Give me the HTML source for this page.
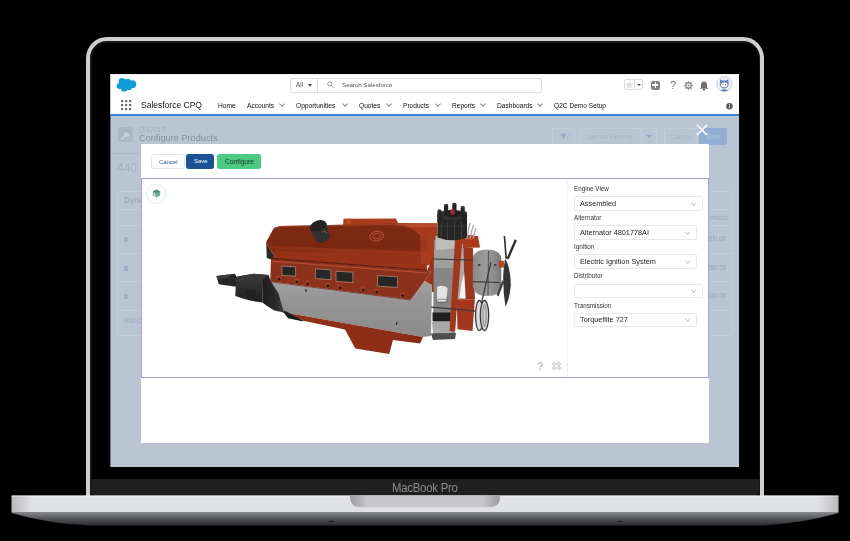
<!DOCTYPE html>
<html><head><meta charset="utf-8">
<style>
*{margin:0;padding:0;box-sizing:border-box}
html,body{width:850px;height:541px;overflow:hidden;background:#000;font-family:"Liberation Sans",sans-serif}
.a{position:absolute}
.t{position:absolute;white-space:nowrap;line-height:1;will-change:transform}
#scr{position:absolute;left:0;top:0;width:850px;height:541px;clip-path:inset(74px 110.5px 74px 110.4px)}
.nav{font-size:6.6px;color:#0e0e0e;top:102.8px}
.chev{position:absolute;top:102.4px;width:4px;height:4px;border-right:0.8px solid #8a8886;border-bottom:0.8px solid #8a8886;transform:rotate(45deg)}
.lbl{font-size:6.3px;color:#333}
.sel{position:absolute;left:574px;height:14.5px;border:1px solid #e6e8eb;border-radius:2px;background:#fff}
.selt{font-size:7.3px;color:#1c1c1c;top:200px}
.schev{position:absolute;width:3.5px;height:3.5px;border-right:0.7px solid #c9c7c5;border-bottom:0.7px solid #c9c7c5;transform:rotate(45deg)}
</style></head><body>

<!-- ===== LID ===== -->
<div class="a" style="left:86px;top:36.8px;width:678px;height:470px;border-radius:21px 21px 0 0;background:#cdcfd2"></div>
<div class="a" style="left:90px;top:40.8px;width:670px;height:466px;border-radius:17px 17px 0 0;background:#161616"></div>
<div class="a" style="left:91.5px;top:42.8px;width:667px;height:466px;border-radius:15px 15px 0 0;background:#000"></div>
<div class="a" style="left:91px;top:479px;width:668px;height:17px;background:#1f1f1f;border-radius:0 0 5px 5px"></div>
<div class="t" style="left:392px;top:481.6px;font-size:11.3px;color:#8c8c8c;letter-spacing:-0.2px;transform:scaleY(1.12);transform-origin:0 0">MacBook Pro</div>

<!-- ===== BASE ===== -->
<svg class="a" style="left:0;top:0" width="850" height="541">
  <defs>
    <linearGradient id="bb" x1="0" y1="0" x2="0" y2="1">
      <stop offset="0" stop-color="#8e8f92"/>
      <stop offset="0.5" stop-color="#55565a"/>
      <stop offset="1" stop-color="#2a2b2e"/>
    </linearGradient>
    <linearGradient id="bl" x1="0" y1="0" x2="1" y2="0">
      <stop offset="0" stop-color="#b9b9bb"/>
      <stop offset="0.025" stop-color="#e1e2e4"/>
      <stop offset="0.975" stop-color="#e1e2e4"/>
      <stop offset="1" stop-color="#b9b9bb"/>
    </linearGradient>
    <linearGradient id="nt" x1="0" y1="0" x2="1" y2="0">
      <stop offset="0" stop-color="#9c9c9e"/>
      <stop offset="0.12" stop-color="#c8c8ca"/>
      <stop offset="0.88" stop-color="#c8c8ca"/>
      <stop offset="1" stop-color="#9c9c9e"/>
    </linearGradient>
  </defs>
  <path d="M11.5 511.5 L838.5 511.5 L838.5 513 Q800 524 760 525.5 L90 525.5 Q50 524 11.5 513 Z" fill="url(#bb)"/>
  <rect x="11.5" y="495.5" width="827" height="16.5" fill="url(#bl)"/>
  <rect x="11.5" y="495.5" width="827" height="1.2" fill="#f0f0f2" opacity="0.6"/>
  <ellipse cx="331.5" cy="521.5" rx="3.4" ry="0.65" fill="#1e1e1e"/>
  <ellipse cx="620.1" cy="521.5" rx="3.4" ry="0.65" fill="#1e1e1e"/>
  <path d="M350 495.5 L500 495.5 L500 496 Q500 507.3 489 507.3 L361 507.3 Q350 507.3 350 496 Z" fill="url(#nt)"/>
</svg>

<!-- ===== SCREEN ===== -->
<div id="scr">
  <!-- page bg overlay -->
  <div class="a" style="left:110px;top:74px;width:629px;height:393px;background:#b9c5d2"></div>
  <!-- header -->
  <div class="a" style="left:110px;top:74px;width:629px;height:40px;background:#fff"></div>
  <div class="a" style="left:110px;top:74px;width:629px;height:1px;background:#efefef"></div>
  <div class="a" style="left:110px;top:113.8px;width:629px;height:2.2px;background:#2e86d8"></div>

  <!-- cloud logo -->
  <svg class="a" style="left:0;top:0" width="850" height="120">
    <g fill="#0f9cd9">
      <circle cx="122.2" cy="81.6" r="3.6"/><circle cx="127.6" cy="81.7" r="3"/><circle cx="132.2" cy="84.2" r="4"/>
      <circle cx="119.6" cy="86" r="2.9"/><circle cx="124.2" cy="88.4" r="3.2"/><circle cx="128.8" cy="87.2" r="3"/>
      <rect x="120" y="81" width="12" height="7"/>
    </g>
  </svg>
  <!-- app launcher -->
  <svg class="a" style="left:121px;top:100px" width="11" height="11">
    <g fill="#706e6b">
      <rect x="0" y="0" width="2.2" height="2.2"/><rect x="4" y="0" width="2.2" height="2.2"/><rect x="8" y="0" width="2.2" height="2.2"/>
      <rect x="0" y="4" width="2.2" height="2.2"/><rect x="4" y="4" width="2.2" height="2.2"/><rect x="8" y="4" width="2.2" height="2.2"/>
      <rect x="0" y="8" width="2.2" height="2.2"/><rect x="4" y="8" width="2.2" height="2.2"/><rect x="8" y="8" width="2.2" height="2.2"/>
    </g>
  </svg>
  <div class="t" style="left:141px;top:100.6px;font-size:8.5px;color:#141414">Salesforce CPQ</div>

  <div class="t nav" style="left:218px">Home</div>
  <div class="t nav" style="left:246.5px">Accounts</div><div class="chev" style="left:280px"></div>
  <div class="t nav" style="left:295.5px">Opportunities</div><div class="chev" style="left:343px"></div>
  <div class="t nav" style="left:359px">Quotes</div><div class="chev" style="left:387px"></div>
  <div class="t nav" style="left:403px">Products</div><div class="chev" style="left:435.5px"></div>
  <div class="t nav" style="left:451.5px">Reports</div><div class="chev" style="left:480.5px"></div>
  <div class="t nav" style="left:497px">Dashboards</div><div class="chev" style="left:538px"></div>
  <div class="t nav" style="left:554px">Q2C Demo Setup</div>

  <!-- search -->
  <div class="a" style="left:289.5px;top:77.5px;width:252.5px;height:15px;border:1px solid #dddbda;border-radius:3px;background:#fff"></div>
  <div class="a" style="left:317px;top:78px;width:1px;height:14px;background:#dddbda"></div>
  <div class="t" style="left:295.5px;top:81.5px;font-size:6.3px;color:#55534f">All</div>
  <div class="a" style="left:307.5px;top:83.5px;width:0;height:0;border-left:2.5px solid transparent;border-right:2.5px solid transparent;border-top:3px solid #514f4d"></div>
  <svg class="a" style="left:327px;top:81px" width="7" height="7"><circle cx="2.8" cy="2.8" r="2.1" fill="none" stroke="#8a8886" stroke-width="0.8"/><line x1="4.3" y1="4.3" x2="6.4" y2="6.4" stroke="#8a8886" stroke-width="0.9"/></svg>
  <div class="t" style="left:341.5px;top:81.5px;font-size:6.2px;color:#55534f">Search Salesforce</div>

  <!-- right icons -->
  <div class="a" style="left:623.5px;top:79.3px;width:19px;height:11px;border:1px solid #dddbda;border-radius:2px;background:#fff"></div>
  <div class="a" style="left:634px;top:79.3px;width:1px;height:11px;background:#dddbda"></div>
  <div class="t" style="left:624.3px;top:78.6px;font-size:12px;color:#e0e0e0">&#9733;</div>
  <div class="a" style="left:637px;top:84px;width:0;height:0;border-left:2px solid transparent;border-right:2px solid transparent;border-top:2.5px solid #514f4d"></div>
  <div class="a" style="left:650.5px;top:80.5px;width:9.5px;height:9px;border-radius:2px;background:#858381"></div>
  <div class="a" style="left:654.6px;top:82px;width:1.3px;height:6px;background:#fff"></div>
  <div class="a" style="left:652.2px;top:84.4px;width:6px;height:1.3px;background:#fff"></div>
  <div class="t" style="left:669.5px;top:80px;font-size:11px;color:#706e6b">?</div>
  <svg class="a" style="left:683.8px;top:80.6px" width="9" height="9" viewBox="0 0 10 10">
    <g fill="#8a8886"><circle cx="5" cy="5" r="3.4"/>
    <rect x="4.1" y="0.2" width="1.8" height="9.6"/><rect x="0.2" y="4.1" width="9.6" height="1.8"/>
    <rect x="4.1" y="0.2" width="1.8" height="9.6" transform="rotate(45 5 5)"/><rect x="4.1" y="0.2" width="1.8" height="9.6" transform="rotate(-45 5 5)"/></g>
    <circle cx="5" cy="5" r="2.3" fill="#fff"/><circle cx="5" cy="5" r="1.2" fill="#8a8886"/>
  </svg>
  <svg class="a" style="left:698.5px;top:80.5px" width="10" height="10" viewBox="0 0 10 10">
    <path d="M5 0.6 C7.2 0.6 8 2.4 8 4.4 L8 6.6 L9.3 7.8 L0.7 7.8 L2 6.6 L2 4.4 C2 2.4 2.8 0.6 5 0.6Z" fill="#706e6b"/>
    <circle cx="5" cy="8.8" r="1.1" fill="#706e6b"/>
  </svg>
  <svg class="a" style="left:715.5px;top:75.6px" width="16.5" height="16" viewBox="0 0 16.5 16">
    <circle cx="8.25" cy="8" r="7.6" fill="#eef1f6" stroke="#c3cbdb" stroke-width="0.9"/>
    <path d="M3.8 6.5 L4.4 3.3 L6.4 4.6 L10.1 4.6 L12.1 3.3 L12.7 6.5 Q13.2 12.2 8.25 12.6 Q3.3 12.2 3.8 6.5Z" fill="#6180bd"/>
    <ellipse cx="8.25" cy="8.9" rx="3.3" ry="2.3" fill="#fff"/>
    <circle cx="7" cy="8.6" r="0.5" fill="#334"/><circle cx="9.5" cy="8.6" r="0.5" fill="#334"/>
    <path d="M4.2 14.3 Q8.25 12 12.3 14.3 Q8.25 16.5 4.2 14.3Z" fill="#6180bd"/>
  </svg>
  <svg class="a" style="left:726px;top:103.3px" width="7" height="7"><circle cx="3.4" cy="3.2" r="3.2" fill="#5a5856"/><rect x="2.95" y="2.6" width="0.9" height="2.5" fill="#fff"/><circle cx="3.4" cy="1.6" r="0.5" fill="#fff"/></svg>

  <!-- page header under overlay -->
  <div class="a" style="left:118.4px;top:127px;width:14.8px;height:15.3px;border-radius:2px;background:#abb7c4"></div>
  <svg class="a" style="left:119.8px;top:128.6px" width="12" height="12" viewBox="0 0 12 12"><path d="M2.5 9.5 L6.8 5.2" stroke="#c8d1db" stroke-width="1.9" stroke-linecap="round"/><path d="M6.2 2.6 A2.6 2.6 0 1 0 9.4 5.8 L8 4.4Z" fill="#c8d1db"/><path d="M8.6 1.6 L10.4 3.4 L9 4.8 L7.2 3Z" fill="#abb7c4"/></svg>
  <div class="t" style="left:139px;top:126.6px;font-size:6.4px;color:#a2adba;letter-spacing:0.2px">Q-17017</div>
  <div class="t" style="left:139px;top:134px;font-size:9.2px;color:#8591a0">Configure Products</div>
  <div class="t" style="left:116.5px;top:162.2px;font-size:12px;color:#a6b1bd">440</div>
  <div class="a" style="left:111px;top:152.8px;width:30px;height:1px;background:#adb9c5"></div>

  <!-- top right overlay buttons -->
  <div class="a" style="left:552px;top:128px;width:22.5px;height:16.5px;border:1px solid #c3cdd8;border-radius:2px"></div>
  <svg class="a" style="left:559.5px;top:133px" width="7" height="7"><path d="M0.5 0.8 L6.5 0.8 L4 3.8 L4 6.2 L3 6.2 L3 3.8Z" fill="#8fa5c4"/></svg>
  <div class="a" style="left:579.5px;top:128px;width:77.5px;height:16.5px;border:1px solid #c3cdd8;border-radius:2px"></div>
  <div class="a" style="left:640.5px;top:128px;width:1px;height:16.5px;background:#c3cdd8"></div>
  <div class="t" style="left:587px;top:133.5px;font-size:6.3px;color:#a1b4cc">Launch External</div>
  <div class="a" style="left:646px;top:135px;width:0;height:0;border-left:3px solid transparent;border-right:3px solid transparent;border-top:3.5px solid #8ba4c8"></div>
  <div class="a" style="left:663.5px;top:128px;width:33px;height:16.5px;border:1px solid #c3cdd8;border-radius:2px"></div>
  <div class="t" style="left:671px;top:133.5px;font-size:6.3px;color:#a1b4cc">Cancel</div>
  <div class="a" style="left:698.5px;top:128px;width:28.5px;height:16.5px;border-radius:2px;background:#93aed3"></div>
  <div class="t" style="left:706px;top:133.8px;font-size:6.3px;color:#b3c6df">Save</div>

  <!-- background card -->
  <div class="a" style="left:117px;top:190.5px;width:616px;height:145px;border:1px solid #c3cdd8;border-radius:3px"></div>
  <div class="a" style="left:117px;top:209px;width:616px;height:1px;background:#c3cdd8"></div>
  <div class="a" style="left:117px;top:225px;width:616px;height:1px;background:#c3cdd8"></div>
  <div class="a" style="left:117px;top:253px;width:616px;height:1px;background:#c3cdd8"></div>
  <div class="a" style="left:117px;top:281.3px;width:616px;height:1px;background:#c3cdd8"></div>
  <div class="a" style="left:117px;top:309.8px;width:616px;height:1px;background:#c3cdd8"></div>
  <div class="t" style="left:124px;top:196px;font-size:8.5px;color:#9aa6b2">Dyna</div>
  <div class="t" style="left:710px;top:214.5px;font-size:6px;color:#9ba7b4">PRICE</div>
  <div class="t" style="left:707px;top:236px;font-size:6.3px;color:#97a3b1">300.00</div>
  <div class="t" style="left:707px;top:264.5px;font-size:6.3px;color:#97a3b1">280.00</div>
  <div class="t" style="left:707px;top:293px;font-size:6.3px;color:#97a3b1">430.00</div>
  <div class="t" style="left:124px;top:317.5px;font-size:6.3px;color:#98acc8">Add C</div>
  <svg class="a" style="left:124px;top:236.5px" width="4" height="5"><rect x="0.3" y="1" width="3.4" height="4" fill="#98acc8"/><rect x="0" y="0" width="4" height="0.8" fill="#98acc8"/></svg>
  <svg class="a" style="left:124px;top:265.5px" width="4" height="5"><rect x="0.3" y="1" width="3.4" height="4" fill="#98acc8"/><rect x="0" y="0" width="4" height="0.8" fill="#98acc8"/></svg>
  <svg class="a" style="left:124px;top:294px" width="4" height="5"><rect x="0.3" y="1" width="3.4" height="4" fill="#98acc8"/><rect x="0" y="0" width="4" height="0.8" fill="#98acc8"/></svg>

  <!-- close X -->
  <svg class="a" style="left:695.5px;top:124px" width="12" height="12"><path d="M1 1 L11 11 M11 1 L1 11" stroke="#fff" stroke-width="1.6"/></svg>

  <!-- ===== MODAL ===== -->
  <div class="a" style="left:141px;top:144.3px;width:568px;height:298.7px;background:#fff"></div>
  <div class="a" style="left:150.5px;top:154.2px;width:34px;height:14.7px;border:1px solid #e2e4e8;border-radius:2.5px;background:#fff"></div>
  <div class="t" style="left:158.5px;top:158.8px;font-size:6px;color:#2d5fa6">Cancel</div>
  <div class="a" style="left:186.2px;top:153.6px;width:28px;height:15px;border-radius:2.5px;background:#1b5296"></div>
  <div class="t" style="left:193.5px;top:157.6px;font-size:6px;color:#fff">Save</div>
  <div class="a" style="left:217.4px;top:153.9px;width:43.6px;height:15px;border-radius:2.5px;background:#4dca81"></div>
  <div class="t" style="left:225.3px;top:159.2px;font-size:6.7px;color:#16301d">Configure</div>

  <!-- canvas border -->
  <div class="a" style="left:141px;top:177.7px;width:567.8px;height:200.3px;border:1px solid #a5a4de"></div>
  <div class="a" style="left:567.3px;top:178.7px;width:1px;height:198.3px;background:#efeff1"></div>

  <!-- cube icon -->
  <div class="a" style="left:146.2px;top:184px;width:19.5px;height:19.5px;border-radius:50%;border:1px solid #d6ece0;background:#fff"></div>
  <svg class="a" style="left:151.5px;top:189px" width="9" height="9" viewBox="0 0 9 9"><path d="M4.5 0.5 L8.2 2.4 L8.2 6.6 L4.5 8.5 L0.8 6.6 L0.8 2.4Z" fill="#6bb39a"/><path d="M4.5 0.5 L8.2 2.4 L4.5 4.3 L0.8 2.4Z" fill="#4f8f7d"/><path d="M2.2 3.5 L2.2 6 L4 7" stroke="#fff" stroke-width="0.7" fill="none"/></svg>

  <!-- canvas icons -->
  <div class="t" style="left:536.6px;top:361px;font-size:10.5px;color:#c2c2c2;font-weight:bold">?</div>
  <svg class="a" style="left:551.5px;top:362.3px" width="9" height="8" viewBox="0 0 9 8"><g fill="none" stroke="#c2c2c2" stroke-width="1"><circle cx="2" cy="2" r="1.4"/><circle cx="7" cy="2" r="1.4"/><circle cx="2" cy="6" r="1.4"/><circle cx="7" cy="6" r="1.4"/><path d="M3.4 2 H5.6 M3.4 6 H5.6"/></g></svg>

  <!-- right panel -->
  <div class="t lbl" style="left:574px;top:185.5px">Engine View</div>
  <div class="sel" style="top:196.2px;width:128.7px"></div>
  <div class="t selt" style="left:579.5px;top:199.5px">Assembled</div>
  <div class="schev" style="left:691.5px;top:201px"></div>

  <div class="t lbl" style="left:574px;top:214.5px">Alternator</div>
  <div class="sel" style="top:225.4px;width:122.8px"></div>
  <div class="t selt" style="left:579.5px;top:228.7px">Alternator 4801778AI</div>
  <div class="schev" style="left:686px;top:230.2px"></div>

  <div class="t lbl" style="left:574px;top:244px">Ignition</div>
  <div class="sel" style="top:254.2px;width:122.8px"></div>
  <div class="t selt" style="left:579.5px;top:257.5px">Electric Ignition System</div>
  <div class="schev" style="left:686px;top:259px"></div>

  <div class="t lbl" style="left:574px;top:273.3px">Distributor</div>
  <div class="sel" style="top:283.5px;width:128.7px"></div>
  <div class="schev" style="left:691.5px;top:288.3px"></div>

  <div class="t lbl" style="left:574px;top:303px">Transmission</div>
  <div class="sel" style="top:312.5px;width:122.8px"></div>
  <div class="t selt" style="left:579.5px;top:315.8px">Torqueflite 727</div>
  <div class="schev" style="left:686px;top:317.3px"></div>

  <!-- ENGINE placeholder -->
  <svg id="engine" class="a" style="left:0;top:0" width="850" height="541">
    <defs>
      <linearGradient id="gblk" x1="0" y1="0" x2="0" y2="1">
        <stop offset="0" stop-color="#a2a2a2"/><stop offset="0.25" stop-color="#979797"/><stop offset="1" stop-color="#8b8b8b"/>
      </linearGradient>
      <linearGradient id="gcov" x1="0" y1="0" x2="0" y2="1">
        <stop offset="0" stop-color="#7e2912"/><stop offset="0.52" stop-color="#7c2711"/><stop offset="0.62" stop-color="#963119"/><stop offset="1" stop-color="#9a331a"/>
      </linearGradient>
      <linearGradient id="gpan" x1="0" y1="0" x2="1" y2="0">
        <stop offset="0" stop-color="#952f17"/><stop offset="1" stop-color="#8a2c16"/>
      </linearGradient>
      <linearGradient id="gtr" x1="0" y1="0" x2="0" y2="1">
        <stop offset="0" stop-color="#3c3c3c"/><stop offset="1" stop-color="#1d1d1d"/>
      </linearGradient>
      <linearGradient id="gbell" x1="0" y1="0" x2="1" y2="0">
        <stop offset="0" stop-color="#1c1c1c"/><stop offset="0.6" stop-color="#2a2a2a"/><stop offset="1" stop-color="#3e3e3e"/>
      </linearGradient>
      <linearGradient id="galt" x1="0" y1="0" x2="1" y2="0">
        <stop offset="0" stop-color="#8a8a8a"/><stop offset="0.5" stop-color="#9c9c9c"/><stop offset="1" stop-color="#7a7a7a"/>
      </linearGradient>
    </defs>
    <!-- far bank / intake behind cover -->
    <path d="M343 226 L343.5 218.8 L396 218.6 L398 223 L437.3 223.2 L438 262 L420 268 L343 264Z" fill="#a83b1c"/>
    <path d="M346 219 L351 218.6 L351 226 L346 226Z" fill="#bb4a2a"/>
    <path d="M380 224.5 L437 223.4 L437 227 L381 228Z" fill="#b9492b"/>
    <!-- valve cover -->
    <path d="M274 227.8 L280.5 226.1 L390 223.8 L405 225.5 L413.5 228.5 L425.9 236.5 L426.8 263 L427 270.5 L271 258.6 L274 255.7 L266.2 243.5 L266.2 242Z" fill="url(#gcov)"/>
    <path d="M274 228.3 L280.5 226.6 L390 224.3 L405 226 L413.5 229 L425.4 237" stroke="#a4452b" stroke-width="1.3" fill="none" opacity="0.8"/>
    <path d="M266.6 245.5 L426.5 252 L426.5 254.5 L268 248.5Z" fill="#a4391d" opacity="0.5"/>
    <path d="M413.5 228.5 L425.9 236.5 L426.8 263 L421 265 L420 236Z" fill="#b4452a" opacity="0.55"/>
    <ellipse cx="376.6" cy="236.2" rx="6.8" ry="4.8" fill="none" stroke="#c65e40" stroke-width="0.8" transform="rotate(-12 376.6 236.2)"/>
    <ellipse cx="376.6" cy="236.2" rx="4" ry="2.7" fill="none" stroke="#c65e40" stroke-width="0.7" transform="rotate(-12 376.6 236.2)"/>
    <path d="M266.2 243.5 L274 255.7 L271.5 259.5 L266.8 258Z" fill="#2a2a2a"/>
    <!-- head / port band -->
    <path d="M271 258.6 L427 270.5 L431 271.8 L424.7 281 L413.5 296.5 L410.6 299.7 L270.2 281.5Z" fill="#8c321c"/>
    <path d="M271 258.4 L427 270.2" stroke="#5a1e0e" stroke-width="1.1"/>
    <path d="M271 261.2 L427 273" stroke="#c7583a" stroke-width="0.8"/>
    <!-- ports -->
    <g fill="#262626" stroke="#d2a18a" stroke-width="0.6">
      <path d="M281.9 266 L295.6 266.9 L295.6 276.2 L281.9 275.3Z"/>
      <path d="M315.4 268.8 L330.9 269.8 L330.9 279.6 L315.4 278.6Z"/>
      <path d="M336 271.2 L352.9 272.3 L352.9 282.6 L336 281.4Z"/>
      <path d="M377.6 275.6 L397.6 276.8 L397.6 287.4 L377.6 286.2Z"/>
    </g>
    <!-- bolts -->
    <g fill="#a53e22">
      <circle cx="278.6" cy="278.2" r="2.6"/><circle cx="296.5" cy="280.8" r="2.6"/><circle cx="307.4" cy="282.8" r="2.6"/>
      <circle cx="327.6" cy="284.8" r="2.6"/><circle cx="339.8" cy="286.8" r="2.6"/><circle cx="362.9" cy="289" r="2.6"/>
      <circle cx="376.5" cy="291.2" r="2.6"/><circle cx="402.4" cy="294.6" r="2.6"/>
    </g>
    <g fill="#1a1a1a">
      <circle cx="278.9" cy="279.2" r="1.4"/><circle cx="296.8" cy="281.8" r="1.4"/><circle cx="307.7" cy="283.8" r="1.4"/>
      <circle cx="327.9" cy="285.8" r="1.4"/><circle cx="340.1" cy="287.8" r="1.4"/><circle cx="363.2" cy="290" r="1.4"/>
      <circle cx="376.8" cy="292.2" r="1.4"/><circle cx="402.7" cy="295.6" r="1.4"/>
    </g>
    <!-- gray block -->
    <path d="M268 281 L410.6 299.7 L424.7 281 L432 285 L431 336 L423 337 L290.4 313.5 L282 312.5 L275 296Z" fill="url(#gblk)"/>
    <path d="M270.2 281.7 L410.6 299.9" stroke="#7d2a15" stroke-width="0.8"/>
    <rect x="305.3" y="289" width="1.4" height="3" fill="#333"/>
    <rect x="396" y="322" width="1.4" height="3" fill="#333"/>
    <g fill="#8e8e8e"><rect x="383" y="300" width="1.5" height="3"/><rect x="392" y="301" width="1.5" height="3"/></g>
    <!-- oil pan -->
    <path d="M290.4 313.5 L304.5 321 L345 329.5 L355.3 348.4 L389.2 354 L393 339.9 L420.2 343.6 L423 337Z" fill="url(#gpan)"/>
    <!-- bell housing -->
    <path d="M262 278.5 L268.6 274.9 L270.5 280.8 L278.6 293.7 L283 309.3 L284.1 312.6 L274.2 310.4 L265.3 304.8 L262.5 302.6Z" fill="url(#gbell)"/>
    <path d="M283.6 312.5 L288 318.2 L300.7 321 L304.5 321.2 L299 318 L290.4 313.6 L284.2 310.5Z" fill="#1e1e1e"/>
    <!-- transmission -->
    <path d="M234.8 277.1 L253.6 273.8 L268.6 274.9 L262 279.9 L262.5 302.6 L255.3 301.5 L245.3 299.3 L235.3 296 L235.9 281.5Z" fill="url(#gtr)"/>
    <path d="M234.8 277.1 L253.6 273.8 L268.6 274.9 L262 279.9 L235.9 281.5Z" fill="#383838"/>
    <path d="M245 290 L256 289 L256 300.5 L250 300.5Z" fill="#222" opacity="0.8"/>
    <path d="M216.4 276 L234.8 273.8 L236 275.5 L236 286.5 L234.2 286.5 L218.7 284.3Z" fill="#262626"/>
    <path d="M216.4 276 L229 274.6 L229.5 277.8 L217.2 279Z" fill="#3a3a3a"/>
    <!-- oil filler cap -->
    <path d="M309.6 228.5 L326.4 222.8 L330 236.5 L316.5 241.5Z" fill="#303030"/>
    <ellipse cx="318" cy="225.8" rx="8.5" ry="5.2" transform="rotate(-22 318 225.8)" fill="#232323"/>
    <ellipse cx="323.2" cy="239" rx="7" ry="3.4" transform="rotate(-22 323.2 239)" fill="#303030"/>
    <path d="M322 232 Q325 230.5 327 233" stroke="#b04a30" stroke-width="0.8" fill="none"/>
    <!-- front: head end -->
    <path d="M427 270.5 L431 262 L437 241 L437 292 L432 292 L432 285 L424.7 281 L431 271.8Z" fill="#98321a"/>
    <!-- timing cover / distributor body gray -->
    <path d="M434 240 L459 239 L455 336 L433 336Z" fill="#868686"/>
    <path d="M435.5 236 L466 236 L460 249 L435.5 250Z" fill="#bdbdbd"/>
    <path d="M434 250 L458 250 L458 268 L434 268Z" fill="#a5a5a5" opacity="0.8"/>
    <path d="M437 287 Q442 284 447.7 288 L446 301.6 L437 301.6Z" fill="#e2e2e2"/>
    <ellipse cx="442" cy="301" rx="6" ry="1.8" fill="none" stroke="#555" stroke-width="0.6"/>
    <rect x="432.5" y="312.5" width="18" height="8.5" fill="#1e1e1e"/>
    <path d="M432 322 L452 322 L451 333 L433 333Z" fill="#a8a8a8"/>
    <path d="M431 333.5 L456 333 L455 339 L433 340Z" fill="#4e4e4e"/>
    <!-- orange strap & water pump -->
    <path d="M459 246 L466 246 L466 299.5 L456 299.5Z" fill="#a9a9a9"/>
    <path d="M461.5 283 L465 270 L465.5 298 L459.5 298Z" fill="#f4f4f4"/>
    <path d="M455 240 L462.5 238.5 L455 331 L449.6 331Z" fill="#a3361b"/>
    <path d="M461 236.5 L478 236 L480 247.5 L463 248Z" fill="#a83a1c"/>
    <rect x="466" y="235" width="7" height="5" fill="#b5462a"/>
    <path d="M463.5 248 L472.9 248 L474.9 299.2 L466 299.2 L464 270Z" fill="#9e351a"/>
    <path d="M456.8 299.2 L474.9 299.2 L472.5 331.1 L457.4 329.3Z" fill="#a3381c"/>
    <!-- distributor cap -->
    <path d="M437.5 215 L467 215 L467 237.5 Q452 243 437.5 237.5Z" fill="#262626"/>
    <ellipse cx="452.2" cy="215" rx="14.7" ry="5.2" fill="#303030"/>
    <ellipse cx="452.5" cy="214" rx="8.5" ry="3.2" fill="#1f1f1f"/>
    <g fill="#232323">
      <rect x="437.4" y="209.4" width="4.2" height="14" rx="2"/>
      <rect x="444" y="203.9" width="4.2" height="12" rx="2"/>
      <rect x="452.3" y="202.8" width="4.2" height="11" rx="2"/>
      <rect x="460.6" y="206.1" width="4.2" height="12" rx="2"/>
      <rect x="462.8" y="211.6" width="4.2" height="13" rx="2"/>
    </g>
    <g fill="#3a3a3a"><ellipse cx="439.5" cy="210.4" rx="1.8" ry="1"/><ellipse cx="446.1" cy="204.9" rx="1.8" ry="1"/><ellipse cx="454.4" cy="203.8" rx="1.8" ry="1"/><ellipse cx="462.7" cy="207.1" rx="1.8" ry="1"/><ellipse cx="464.9" cy="212.6" rx="1.8" ry="1"/></g>
    <g stroke="#454545" stroke-width="0.8"><line x1="441.5" y1="222" x2="441.5" y2="238"/><line x1="447.5" y1="222" x2="447.5" y2="240"/><line x1="454.5" y1="221" x2="454.5" y2="240.5"/><line x1="461.5" y1="222" x2="461.5" y2="238.5"/></g>
    <path d="M438 226 L466 226" stroke="#3a3a3a" stroke-width="0.8"/>
    <rect x="450.5" y="209.5" width="4" height="5" fill="#a82a3a"/>
    <g stroke="#a8a8a8" stroke-width="1.3" fill="none"><path d="M467 239 Q468 230 470 223"/><path d="M470 239 Q471.5 231 473.5 225"/><path d="M473 238.5 Q474.5 232 476 228"/></g>
    <!-- alternator -->
    <path d="M472.9 258 Q474 249.4 487 249.4 Q500 249.4 501.3 258 L501.3 286 Q500 296 487 296 Q474 296 472.9 286Z" fill="url(#galt)"/>
    <path d="M488.4 251 L488 295" stroke="#444" stroke-width="0.9"/>
    <g fill="#444"><rect x="478" y="264" width="2.4" height="2"/><rect x="494" y="264" width="2.4" height="2"/></g>
    <path d="M498.7 260.4 L503.9 261 L503.9 267.5 L498.7 267.5Z" fill="#b0401f"/>
    <!-- rods/belts -->
    <g stroke="#3a3a3a" stroke-width="1.2">
      <line x1="433.6" y1="259" x2="473" y2="260"/>
      <line x1="473" y1="281.7" x2="500" y2="282.5"/>
      <line x1="431" y1="307.2" x2="479.6" y2="311.3"/>
      <line x1="491" y1="262" x2="481" y2="305"/>
    </g>
    <!-- pulleys -->
    <ellipse cx="479.4" cy="315.5" rx="3.9" ry="15" fill="#dcdcdc" stroke="#3a3a3a" stroke-width="1.3"/>
    <ellipse cx="484.5" cy="315.5" rx="4.2" ry="15" fill="#d0d0d0" stroke="#3a3a3a" stroke-width="1.3"/>
    <ellipse cx="484.5" cy="315.5" rx="1.6" ry="11" fill="none" stroke="#666" stroke-width="0.7"/>
    <!-- fan -->
    <path d="M503.6 235.8 L505.2 236 L507 258.5 L505.4 258.8Z" fill="#2a2a2a"/>
    <path d="M514.8 239.2 L516.9 240.6 L508.6 259.5 L506.6 258.4Z" fill="#2c2c2c"/>
    <path d="M505.2 258.5 Q510.5 268 510.8 285 Q510 298 505.5 306.7 Q503 292 503.2 276 Q503.8 265 505.2 258.5Z" fill="#353535"/>
    <path d="M502.5 280 L504 282 L498.5 296.5 L496.6 295Z" fill="#3c3c3c"/>
    </svg>
</div>
</body></html>
